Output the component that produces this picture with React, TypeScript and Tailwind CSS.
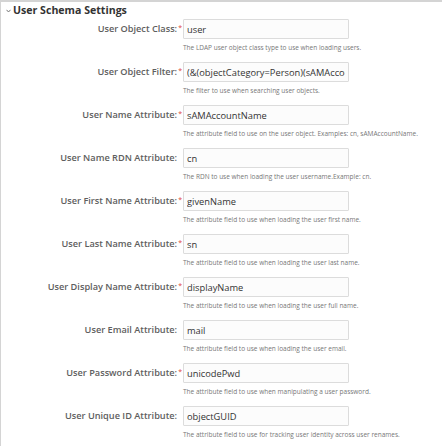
import React from "react";

type Row = { label: string; req: boolean; value: string; help: string };

const rows: Row[] = [
  { label: "User Object Class:", req: true, value: "user", help: "The LDAP user object class type to use when loading users." },
  { label: "User Object Filter:", req: true, value: "(&(objectCategory=Person)(sAMAccountName=*))", help: "The filter to use when searching user objects." },
  { label: "User Name Attribute:", req: true, value: "sAMAccountName", help: "The attribute field to use on the user object. Examples: cn, sAMAccountName." },
  { label: "User Name RDN Attribute:", req: false, value: "cn", help: "The RDN to use when loading the user username.Example: cn." },
  { label: "User First Name Attribute:", req: true, value: "givenName", help: "The attribute field to use when loading the user first name." },
  { label: "User Last Name Attribute:", req: true, value: "sn", help: "The attribute field to use when loading the user last name." },
  { label: "User Display Name Attribute:", req: true, value: "displayName", help: "The attribute field to use when loading the user full name." },
  { label: "User Email Attribute:", req: false, value: "mail", help: "The attribute field to use when loading the user email." },
  { label: "User Password Attribute:", req: true, value: "unicodePwd", help: "The attribute field to use when manipulating a user password." },
  { label: "User Unique ID Attribute:", req: false, value: "objectGUID", help: "The attribute field to use for tracking user identity across user renames." },
];

export default function App() {
  return (
    <div
      className="w-[442px] h-[446px] bg-white border-t-2 border-l border-[#d4d4d4] overflow-hidden"
      style={{ fontFamily: '"Open Sans", "Noto Sans", sans-serif' }}
    >
      <div className="flex items-center h-[16px] pl-[5px] text-[#333]">
        <svg width="5" height="4" viewBox="0 0 5 4" className="mr-[2px] mt-[1px]">
          <path d="M0.5 0.8 L2.5 3 L4.5 0.8" fill="none" stroke="#666" strokeWidth="0.9" />
        </svg>
        <span className="text-[10.6px] font-bold leading-[16px]">User Schema Settings</span>
      </div>
      <div className="flex flex-col gap-[10px] pt-[1px]">
        {rows.map((r) => (
          <div key={r.label} className="flex">
            <div className="w-[182px] shrink-0 h-[20px] flex items-center justify-end pr-[1px]">
              <span className="text-[9.2px] font-semibold text-[#5e5e5e] leading-[20px] whitespace-nowrap">{r.label}</span>
              <span className={`text-[7px] leading-[10px] self-start mt-[4px] ml-[1px] ${r.req ? "text-[#e0453a]" : "text-transparent"}`}>*</span>
            </div>
            <div className="flex flex-col">
              <input
                readOnly
                value={r.value}
                className="w-[166px] h-[20px] border border-[#dcdcdc] bg-[#fcfcfc] rounded-[1px] px-[3px] text-[9.3px] text-[#333] outline-none"
                style={{ fontFamily: '"Open Sans", "Noto Sans", sans-serif' }}
              />
              <div className="mt-[5px] text-[6.5px] leading-[8px] text-[#777] whitespace-nowrap">{r.help}</div>
            </div>
          </div>
        ))}
      </div>
    </div>
  );
}
